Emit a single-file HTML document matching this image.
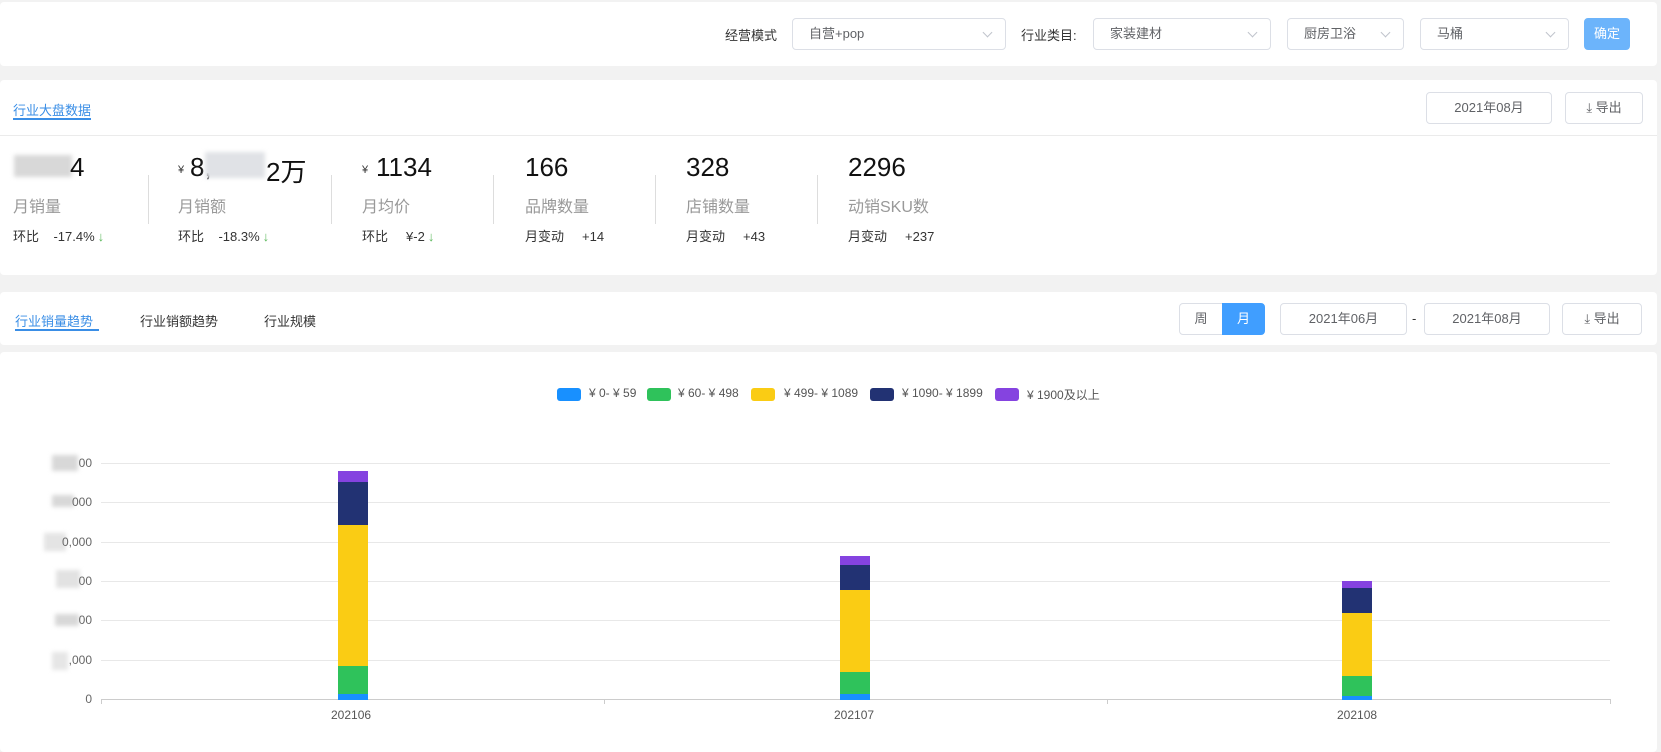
<!DOCTYPE html>
<html><head><meta charset="utf-8"><style>
*{box-sizing:border-box;margin:0;padding:0}
body{width:1661px;height:745px;background:#f2f2f2;font-family:"Liberation Sans","Noto Sans CJK SC",sans-serif;position:relative;overflow:hidden;color:#333}
.a{position:absolute}
.card{position:absolute;left:0;width:1657px;background:#fff;border-radius:4px}
.sel{position:absolute;height:32px;border:1px solid #dcdfe6;border-radius:4px;background:#fff;font-size:13px;color:#606266;line-height:30px;padding-left:16px}
.sel:after{content:"";position:absolute;right:14px;top:10px;width:6px;height:6px;border-right:1px solid #c0c4cc;border-bottom:1px solid #c0c4cc;transform:rotate(45deg)}
.btn{position:absolute;height:32px;border:1px solid #dcdfe6;border-radius:4px;background:#fff;font-size:13px;color:#606266;line-height:30px;text-align:center}
.lbl{font-size:13px;color:#333}
.big{font-size:26px;color:#111;top:152px}
.cap{font-size:16px;color:#999;top:193px}
.sm{font-size:13px;color:#333;top:226px}
.ar{color:#5cb85c;margin-left:3px}
.dv{position:absolute;top:175px;width:1px;height:49px;background:#ddd}
.grid{position:absolute;left:101px;width:1509px;height:1px;background:#e8e8e8}
.yl{position:absolute;right:1569px;font-size:12px;color:#666;text-align:right}
.blur{position:absolute;background:#d8d8d8;filter:blur(2px)}
.seg{position:absolute}
.leg{position:absolute;top:388px;width:24px;height:13px;border-radius:3px}
.lt{position:absolute;top:386px;font-size:12px;color:#555}
</style></head><body>
<div class="card" style="top:2px;height:64px"></div>
<div class="a lbl" style="left:725px;top:25px">经营模式</div>
<div class="sel" style="left:792px;top:18px;width:214px">自营+pop</div>
<div class="a lbl" style="left:1021px;top:25px">行业类目:</div>
<div class="sel" style="left:1093px;top:18px;width:178px">家装建材</div>
<div class="sel" style="left:1287px;top:18px;width:117px">厨房卫浴</div>
<div class="sel" style="left:1420px;top:18px;width:149px">马桶</div>
<div class="btn" style="left:1584px;top:18px;width:46px;background:#6cb4fb;border-color:#6cb4fb;color:#fff">确定</div>

<div class="card" style="top:80px;height:195px"></div>
<div class="a" style="left:13px;top:100px;font-size:13px;color:#3a8ee6">行业大盘数据</div>
<div class="a" style="left:13px;top:118px;width:78px;height:2px;background:#3a8ee6"></div>
<div class="a" style="left:0;top:135px;width:1657px;height:1px;background:#ebebeb"></div>
<div class="btn" style="left:1426px;top:92px;width:126px">2021年08月</div>
<div class="btn" style="left:1565px;top:92px;width:78px">⤓ 导出</div>

<div class="blur" style="left:14px;top:155px;width:58px;height:22px"></div>
<div class="a big" style="left:70px">4</div>
<div class="a cap" style="left:13px">月销量</div>
<div class="a sm" style="left:13px">环比 &nbsp; &nbsp;-17.4%<span class="ar">↓</span></div>
<div class="dv" style="left:148px"></div>
<div class="a" style="left:178px;top:164px;font-size:11px">¥</div>
<div class="a big" style="left:190px">8,</div>
<div class="blur" style="left:205px;top:152px;width:60px;height:26px;background:#e0e2e6"></div>
<div class="a big" style="left:266px">2万</div>
<div class="a cap" style="left:178px">月销额</div>
<div class="a sm" style="left:178px">环比 &nbsp; &nbsp;-18.3%<span class="ar">↓</span></div>
<div class="dv" style="left:331px"></div>
<div class="a" style="left:362px;top:164px;font-size:11px">¥</div>
<div class="a big" style="left:376px">1134</div>
<div class="a cap" style="left:362px">月均价</div>
<div class="a sm" style="left:362px">环比 &nbsp; &nbsp; ¥-2<span class="ar">↓</span></div>
<div class="dv" style="left:493px"></div>
<div class="a big" style="left:525px">166</div>
<div class="a cap" style="left:525px">品牌数量</div>
<div class="a sm" style="left:525px">月变动 &nbsp; &nbsp; +14</div>
<div class="dv" style="left:655px"></div>
<div class="a big" style="left:686px">328</div>
<div class="a cap" style="left:686px">店铺数量</div>
<div class="a sm" style="left:686px">月变动 &nbsp; &nbsp; +43</div>
<div class="dv" style="left:817px"></div>
<div class="a big" style="left:848px">2296</div>
<div class="a cap" style="left:848px">动销SKU数</div>
<div class="a sm" style="left:848px">月变动 &nbsp; &nbsp; +237</div>

<div class="card" style="top:292px;height:53px"></div>
<div class="a" style="left:15px;top:311px;font-size:13px;color:#3a8ee6">行业销量趋势</div>
<div class="a" style="left:15px;top:329px;width:84px;height:2px;background:#3a8ee6"></div>
<div class="a lbl" style="left:140px;top:311px">行业销额趋势</div>
<div class="a lbl" style="left:264px;top:311px">行业规模</div>
<div class="btn" style="left:1179px;top:303px;width:44px;border-radius:4px 0 0 4px">周</div>
<div class="btn" style="left:1222px;top:303px;width:43px;border-radius:0 4px 4px 0;background:#409eff;border-color:#409eff;color:#fff">月</div>
<div class="btn" style="left:1280px;top:303px;width:127px">2021年06月</div>
<div class="a lbl" style="left:1412px;top:311px">-</div>
<div class="btn" style="left:1424px;top:303px;width:126px">2021年08月</div>
<div class="btn" style="left:1562px;top:303px;width:80px">⤓ 导出</div>

<div class="card" style="top:352px;height:400px"></div>
<div class="leg" style="left:557px;background:#1890ff"></div><div class="lt" style="left:589px">¥ 0- ¥ 59</div>
<div class="leg" style="left:647px;background:#2fc25b"></div><div class="lt" style="left:678px">¥ 60- ¥ 498</div>
<div class="leg" style="left:751px;background:#facc14"></div><div class="lt" style="left:784px">¥ 499- ¥ 1089</div>
<div class="leg" style="left:870px;background:#223273"></div><div class="lt" style="left:902px">¥ 1090- ¥ 1899</div>
<div class="leg" style="left:995px;background:#8543e0"></div><div class="lt" style="left:1027px">¥ 1900及以上</div>

<div class="grid" style="top:463px"></div><div class="grid" style="top:502px"></div><div class="grid" style="top:542px"></div><div class="grid" style="top:581px"></div><div class="grid" style="top:620px"></div><div class="grid" style="top:660px"></div>
<div class="a" style="left:101px;top:699px;width:1509px;height:1px;background:#ccc"></div>
<div class="a" style="left:604px;top:699px;width:1px;height:5px;background:#ccc"></div>
<div class="a" style="left:1107px;top:699px;width:1px;height:5px;background:#ccc"></div>
<div class="a" style="left:1610px;top:699px;width:1px;height:5px;background:#ccc"></div>
<div class="a" style="left:101px;top:699px;width:1px;height:5px;background:#ccc"></div>

<div class="blur" style="left:52px;top:455px;width:26px;height:16px"></div><div class="yl" style="top:456px">00</div>
<div class="blur" style="left:52px;top:495px;width:22px;height:12px"></div><div class="yl" style="top:495px">000</div>
<div class="blur" style="left:44px;top:533px;width:22px;height:18px;background:#e4e4e4"></div><div class="yl" style="top:535px">0,000</div>
<div class="blur" style="left:56px;top:570px;width:24px;height:18px;background:#e2e2e2"></div><div class="yl" style="top:574px">00</div>
<div class="blur" style="left:55px;top:614px;width:24px;height:12px"></div><div class="yl" style="top:613px">00</div>
<div class="blur" style="left:52px;top:652px;width:16px;height:18px;background:#e6e6e6"></div><div class="yl" style="top:653px">,000</div>
<div class="yl" style="top:692px">0</div>

<div class="seg" style="left:338px;width:30px;top:471px;height:11px;background:#8543e0"></div>
<div class="seg" style="left:338px;width:30px;top:482px;height:43px;background:#223273"></div>
<div class="seg" style="left:338px;width:30px;top:525px;height:141px;background:#facc14"></div>
<div class="seg" style="left:338px;width:30px;top:666px;height:28px;background:#2fc25b"></div>
<div class="seg" style="left:338px;width:30px;top:694px;height:6px;background:#1890ff"></div>
<div class="seg" style="left:840px;width:30px;top:556px;height:9px;background:#8543e0"></div>
<div class="seg" style="left:840px;width:30px;top:565px;height:25px;background:#223273"></div>
<div class="seg" style="left:840px;width:30px;top:590px;height:82px;background:#facc14"></div>
<div class="seg" style="left:840px;width:30px;top:672px;height:22px;background:#2fc25b"></div>
<div class="seg" style="left:840px;width:30px;top:694px;height:6px;background:#1890ff"></div>
<div class="seg" style="left:1342px;width:30px;top:581px;height:7px;background:#8543e0"></div>
<div class="seg" style="left:1342px;width:30px;top:588px;height:25px;background:#223273"></div>
<div class="seg" style="left:1342px;width:30px;top:613px;height:63px;background:#facc14"></div>
<div class="seg" style="left:1342px;width:30px;top:676px;height:20px;background:#2fc25b"></div>
<div class="seg" style="left:1342px;width:30px;top:696px;height:4px;background:#1890ff"></div>

<div class="a" style="left:331px;top:708px;font-size:12px;color:#555">202106</div>
<div class="a" style="left:834px;top:708px;font-size:12px;color:#555">202107</div>
<div class="a" style="left:1337px;top:708px;font-size:12px;color:#555">202108</div>
</body></html>
